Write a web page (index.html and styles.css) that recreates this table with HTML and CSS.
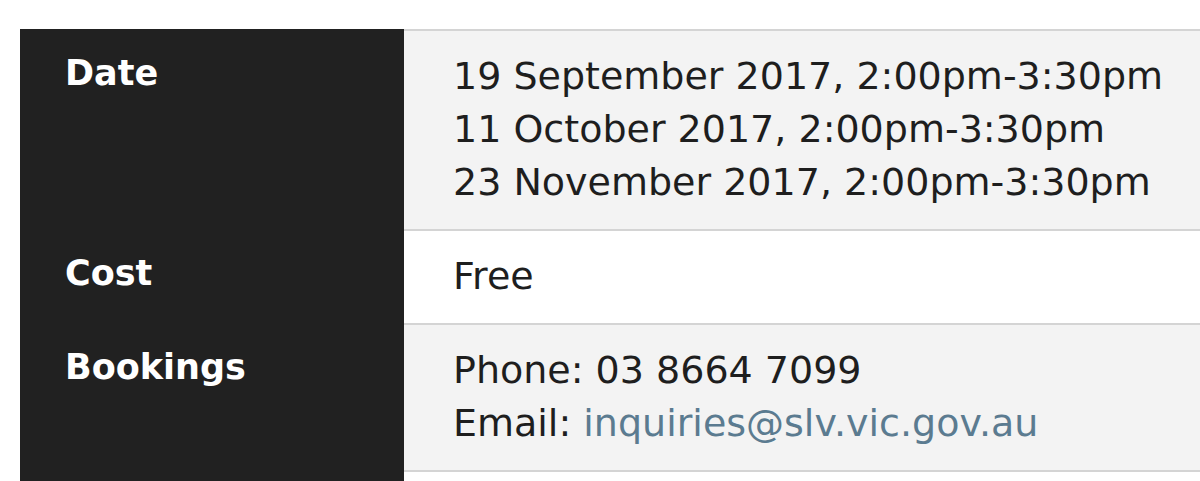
FILE: index.html
```html
<!DOCTYPE html>
<html lang="en">
  <head>
    <meta charset="UTF-8" />
    <title>Event details</title>
    <link rel="stylesheet" href="styles.css">
  </head>
  <body>
    <table class="details">
      <tr class="row shaded">
        <th>Date</th>
        <td>
          19 September 2017, 2:00pm-3:30pm<br />
          11 October 2017, 2:00pm-3:30pm<br />
          23 November 2017, 2:00pm-3:30pm
        </td>
      </tr>
      <tr class="row">
        <th>Cost</th>
        <td>Free</td>
      </tr>
      <tr class="row shaded">
        <th>Bookings</th>
        <td>
          Phone: 03 8664 7099<br />
          Email: <a href="#">inquiries@slv.vic.gov.au</a>
        </td>
      </tr>
      <tr class="row">
        <th>&nbsp;</th>
        <td>&nbsp;</td>
      </tr>
    </table>
  </body>
</html>
```

FILE: styles.css
```css
* {
  margin: 0;
  padding: 0;
  box-sizing: border-box;
}

html,
body {
  overflow: hidden;
  background-color: #fff;
}

body {
  padding-top: 29px;
  padding-left: 20px;
  font-family: 'DejaVu Sans', sans-serif;
  color: #1e1e1e;
}

.details {
  width: 1300px;
  border-collapse: collapse;
}

.details th {
  width: 384px;
  padding: 16px 45px;
  vertical-align: top;
  text-align: left;
  font-size: 35px;
  line-height: 53px;
  font-weight: bold;
  color: #fff;
  background-color: #212121;
  border-top: 2px solid #212121;
  border-bottom: 2px solid #212121;
}

.details td {
  padding: 19px 49px 20px;
  vertical-align: top;
  font-size: 38px;
  line-height: 53px;
  border-top: 2px solid #d4d4d4;
  border-bottom: 2px solid #d4d4d4;
}

.shaded td {
  background-color: #f3f3f3;
}

.details a {
  color: #5b7b90;
  text-decoration: none;
}
```
